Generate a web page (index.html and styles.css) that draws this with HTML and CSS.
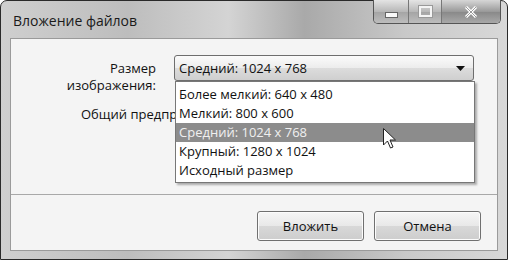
FILE: index.html
```html
<!DOCTYPE html>
<html lang="ru">
<head>
    <meta charset="UTF-8">
    <title>Вложение файлов</title>
    <link rel="stylesheet" href="styles.css">
</head>
<body>
    <div class="window">
        <div class="titlebar">
            <span class="title">Вложение файлов</span>
            <div class="caption-btns">
                <span class="cbtn cbtn-min"><i></i></span>
                <span class="cbtn cbtn-max"><i></i></span>
                <span class="cbtn cbtn-close">
                    <svg width="14" height="12" viewBox="0 0 14 12"><path d="M2 1 L12 11 M12 1 L2 11" stroke="#fff" stroke-width="3"/><path d="M2 1 L12 11 M12 1 L2 11" stroke="#555" stroke-width="0.6" fill="none"/></svg>
                </span>
            </div>
        </div>
        <div class="client">
            <div class="form">
                <div class="label">Размер<br>изображения:</div>
                <div class="combo">
                    <span>Средний: 1024 x 768</span>
                    <svg class="arrow" width="9" height="5" viewBox="0 0 9 5"><path d="M0 0 H9 L4.5 5 Z" fill="#111"/></svg>
                </div>
                <div class="label label-left">Общий предпросмотр:</div>
                <div></div>
            </div>
            <div class="footer">
                <button class="btn">Вложить</button>
                <button class="btn">Отмена</button>
            </div>
            <ul class="list">
                <li>Более мелкий: 640 x 480</li>
                <li>Мелкий: 800 x 600</li>
                <li class="active">Средний: 1024 x 768</li>
                <li>Крупный: 1280 x 1024</li>
                <li>Исходный размер</li>
            </ul>
            <svg class="cursor" width="14" height="22" viewBox="0 0 14 22"><path d="M0.5 0.5 V17 L4.5 13 L7.5 20 L10 19 L7 12 H12.5 Z" fill="#fff" stroke="#222" stroke-width="1"/></svg>
        </div>
    </div>
</body>
</html>
```

FILE: styles.css
```css
body {
    margin: 0;
    background: #fff;
    font: 13px/19px "Open Sans", "Noto Sans", sans-serif;
    color: #111;
}

.window {
    width: 508px;
    height: 260px;
    box-sizing: border-box;
    border: 1px solid #2a2a2a;
    border-radius: 7px 7px 0 0;
    background: linear-gradient(90deg, #cfcfcf 0%, #bdbdbd 25%, #d4d4d4 45%, #a9a9a9 60%, #c9c9c9 80%, #d8d8d8 100%);
    padding: 0 9px 8px 9px;
    display: flex;
    flex-direction: column;
}

.titlebar {
    height: 37px;
    display: flex;
    justify-content: space-between;
    align-items: flex-start;
}

.title {
    font-size: 14px;
    line-height: 16px;
    margin: 12px 0 0 3px;
    color: #1a1a1a;
}

.caption-btns {
    display: flex;
    margin-right: -3px;
    margin-top: -1px;
    border: 1px solid #555;
    border-top: none;
    border-radius: 0 0 5px 5px;
    overflow: hidden;
}

.cbtn {
    height: 23px;
    display: flex;
    align-items: center;
    justify-content: center;
    background: linear-gradient(#e4e4e4, #b8b8b8 50%, #a4a4a4 51%, #bdbdbd);
}

.cbtn-min {
    width: 34px;
    border-right: 1px solid #777;
}

.cbtn-min i {
    width: 11px;
    height: 4px;
    margin-top: 6px;
    background: #fafafa;
    border: 1px solid #666;
}

.cbtn-max {
    width: 32px;
    border-right: 1px solid #777;
}

.cbtn-max i {
    width: 9px;
    height: 7px;
    border: 2px solid #f4f4f4;
    outline: 1px solid #999;
}

.cbtn-close {
    width: 58px;
    background: linear-gradient(#d6d6d6, #9a9a9a 50%, #888 51%, #a8a8a8);
}

.client {
    flex: 1;
    position: relative;
    background: #f4f4f4;
    border: 1px solid #9a9a9a;
    display: flex;
    flex-direction: column;
}

.form {
    height: 156px;
    display: grid;
    grid-template-columns: 145px 300px;
    grid-template-rows: 47px auto;
    column-gap: 18px;
    padding: 16px 0 0 0;
    box-sizing: border-box;
    border-bottom: 1px solid #a8a8a8;
}

.label {
    text-align: right;
    line-height: 17px;
    padding-top: 5px;
}

.label-left {
    text-align: left;
    width: 164px;
    box-sizing: border-box;
    height: 26px;
    overflow: hidden;
    padding: 4px 0 0 70px;
    white-space: nowrap;
}

.combo {
    height: 26px;
    box-sizing: border-box;
    border: 1px solid #6e6e6e;
    border-radius: 3px;
    background: linear-gradient(#fbfbfb, #ececec 50%, #dcdcdc 51%, #cfcfcf);
    display: flex;
    align-items: center;
    justify-content: space-between;
    padding: 0 8px 0 4px;
}

.footer {
    flex: 1;
    display: flex;
    justify-content: flex-end;
    align-items: flex-start;
    gap: 10px;
    padding: 16px 16px 0 0;
}

.btn {
    width: 107px;
    height: 30px;
    font: inherit;
    color: #111;
    border: 1px solid #707070;
    border-radius: 3px;
    background: linear-gradient(#f6f6f6, #e8e8e8 50%, #d8d8d8 51%, #cdcdcd);
    box-shadow: inset 0 0 0 1px #fcfcfc;
}

.list {
    position: absolute;
    left: 164px;
    top: 42px;
    width: 300px;
    margin: 0;
    padding: 3px 0 2px;
    list-style: none;
    box-sizing: border-box;
    background: #fff;
    border: 1px solid #777;
    box-shadow: 2px 2px 2px rgba(0, 0, 0, 0.3);
}

.list li {
    padding-left: 3px;
    height: 19px;
}

.list .active {
    background: #8c8c8c;
    color: #f0f0f0;
}

.cursor {
    position: absolute;
    left: 372px;
    top: 89px;
}
```
